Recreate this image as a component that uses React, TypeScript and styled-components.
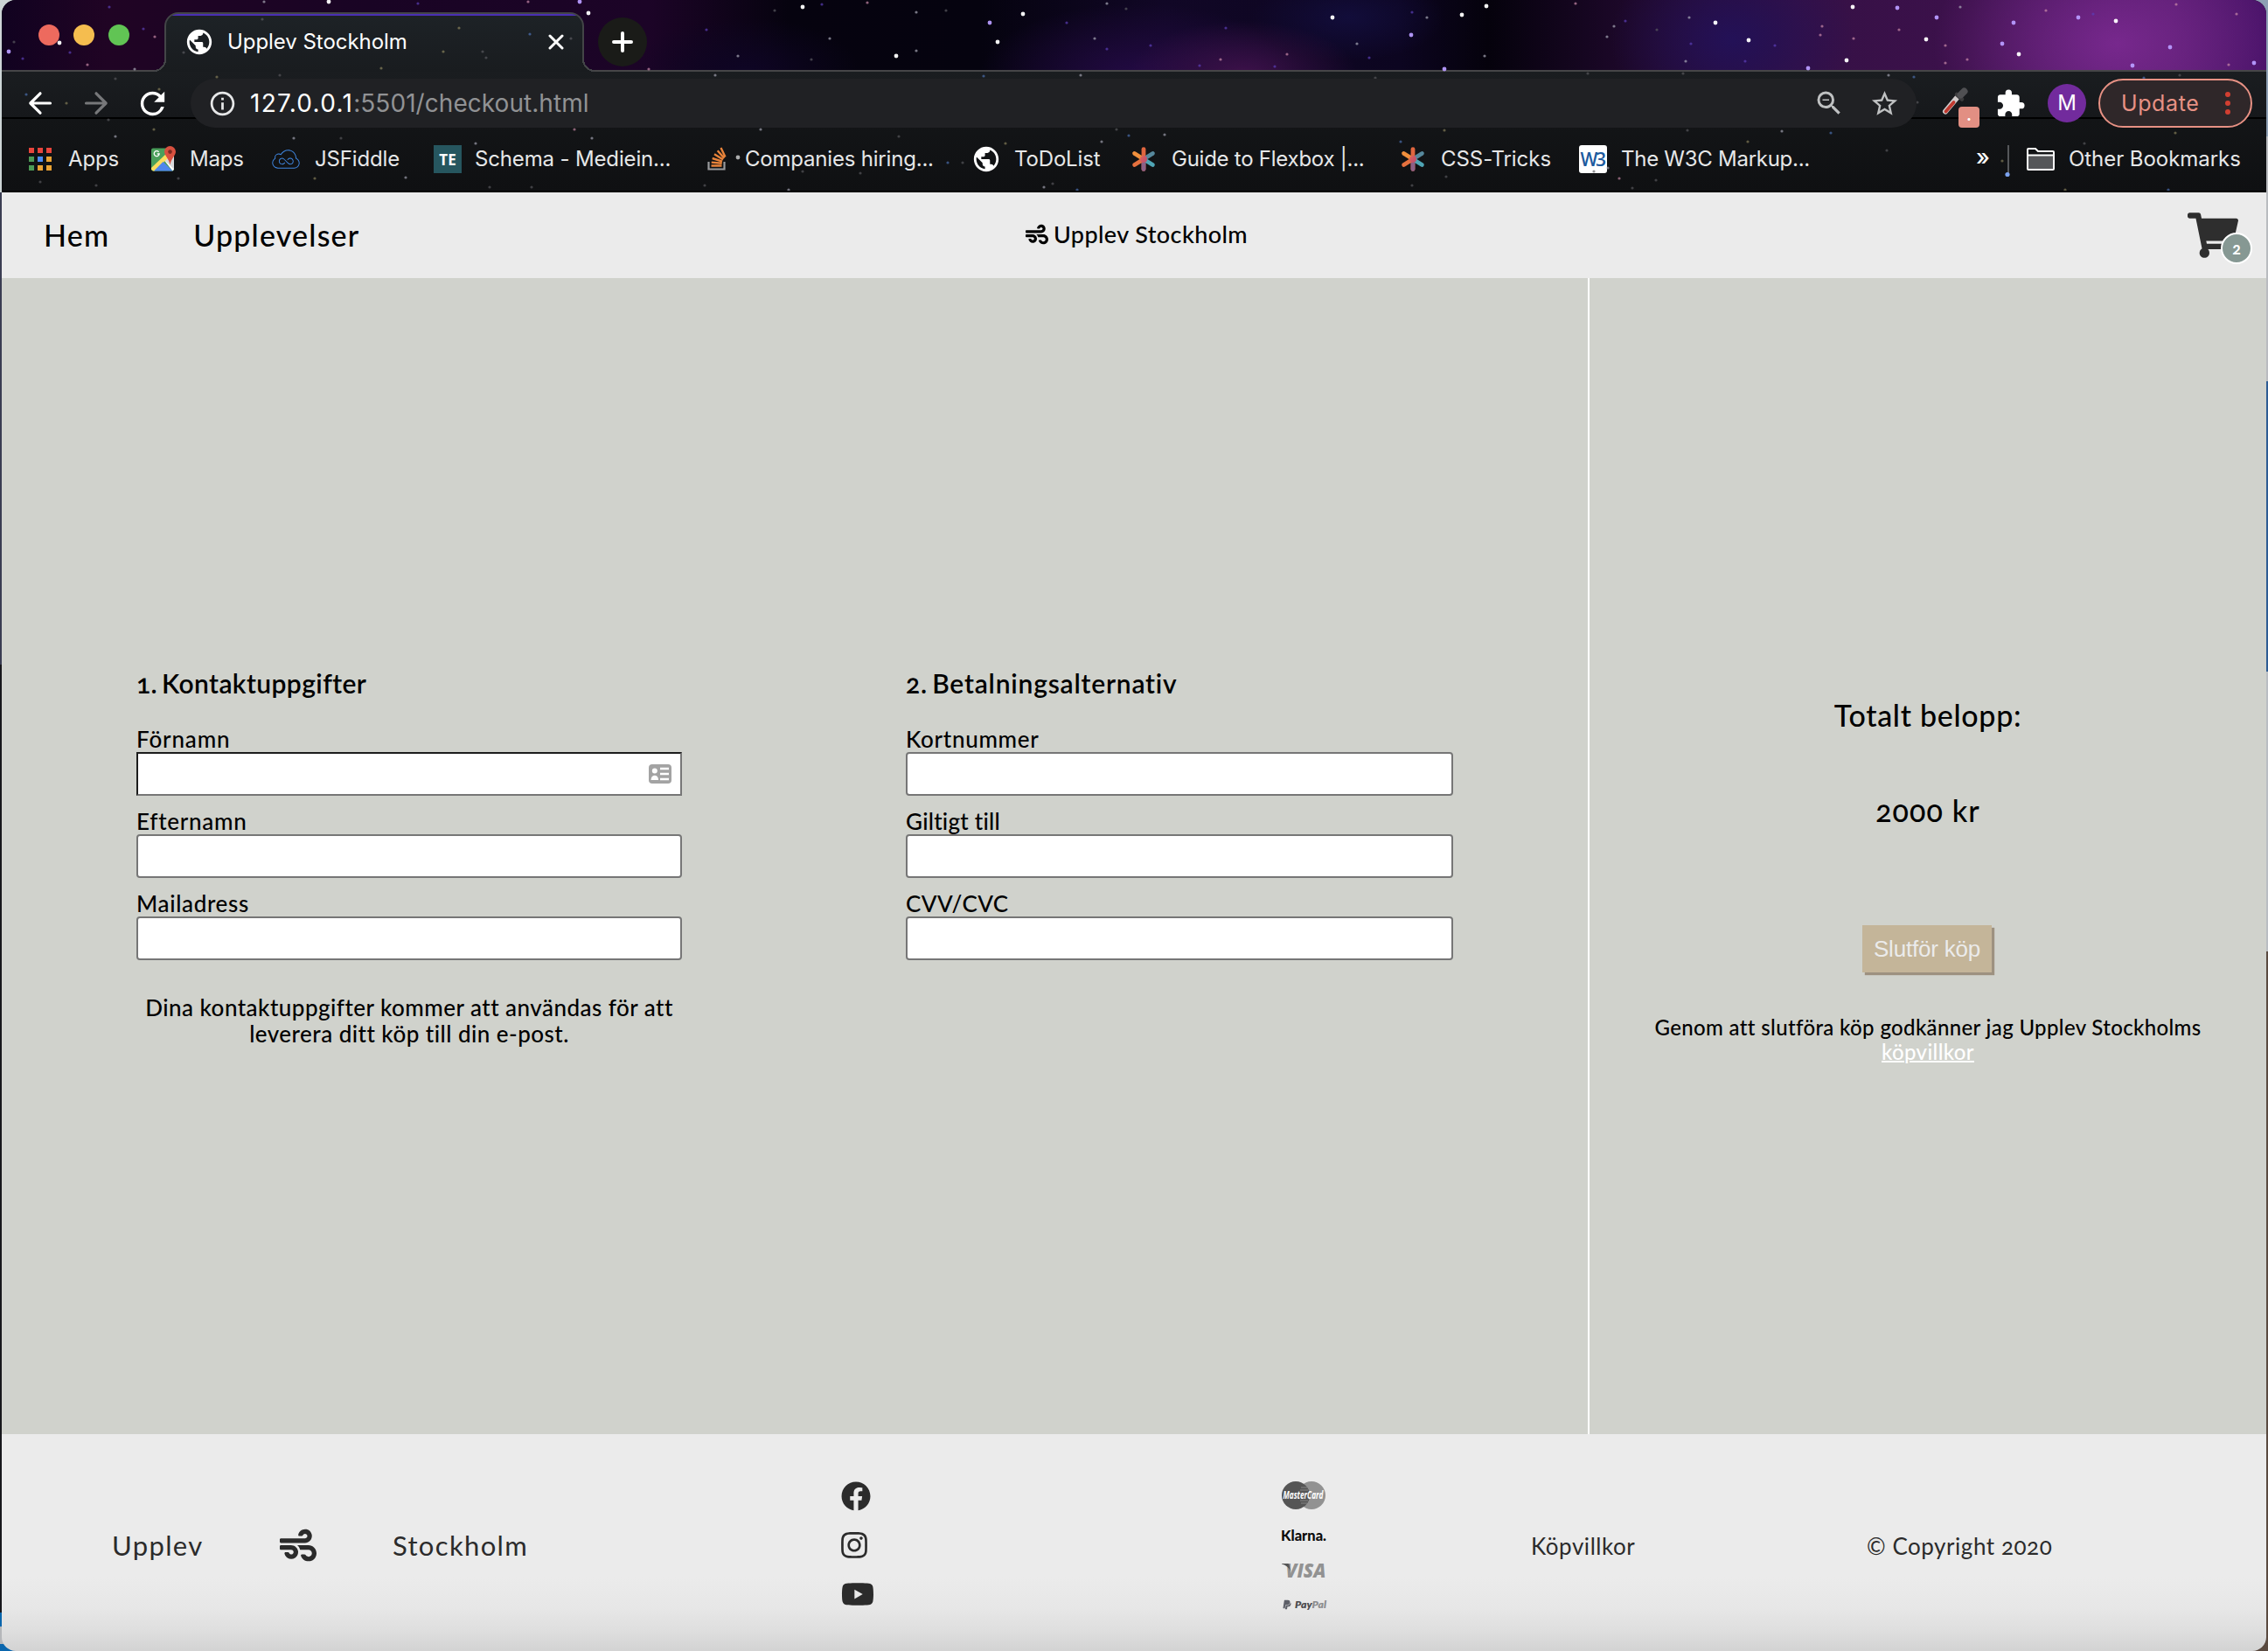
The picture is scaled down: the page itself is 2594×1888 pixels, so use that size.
import React from 'react';
import styled, { createGlobalStyle } from 'styled-components';
import { FaFacebook, FaInstagram, FaYoutube, FaWind, FaShoppingCart, FaJsfiddle, FaPaypal } from 'react-icons/fa';
import { MdPublic, MdRefresh, MdStarBorder, MdZoomOut, MdInfoOutline, MdExtension } from 'react-icons/md';

const Global = createGlobalStyle`
  * { box-sizing: border-box; }
  body { margin: 0; }
  svg { display: block; flex: none; }
`;

const ui = 'Inter, "Noto Sans", sans-serif';
const body = 'Lato, "Open Sans", sans-serif';

/* ---------- window ---------- */

const Desktop = styled.div`
  width: 2594px;
  height: 1888px;
  padding: 0 2px;
  overflow: hidden;
  background:
    linear-gradient(#cdd5d6 0 220px, #3a3d52 220px 760px, #17171b 760px 1844px, #0a66ad 1844px 1860px, #b5b7ba 1860px 1880px, #0a66ad 1880px) left / 50% 100% no-repeat,
    linear-gradient(#8d9fb4 0 156px, #b9bbbf 156px 436px, #2d5c94 436px 768px, #b9bdc2 768px 1088px, #5a4a40 1088px) right / 50% 100% no-repeat;
`;

const Window = styled.div`
  display: flex;
  flex-direction: column;
  height: 100%;
  border-radius: 16px;
  overflow: hidden;
`;

const Chrome = styled.div`
  position: relative;
  height: 220px;
  border-bottom: 2px solid #000;
  font-family: ${ui};
  background: #15181b;
`;

const StarField = styled.svg`
  position: absolute;
  left: -2px;
  top: 0;
  pointer-events: none;
`;

const TabStrip = styled.div`
  display: flex;
  align-items: flex-start;
  height: 82px;
  padding: 14px 0 0 187px;
  box-shadow: inset 0 -2px #464648;
  background:
    radial-gradient(ellipse 210px 150px at 2420px 50px, #77288d, #77288d00),
    radial-gradient(ellipse 140px 110px at 1980px 45px, #231157, #23115700),
    radial-gradient(ellipse 130px 60px at 1420px 84px, #3c1149, #3c114900),
    radial-gradient(ellipse 180px 80px at 1300px 84px, #220a42, #220a4200),
    radial-gradient(ellipse 110px 50px at 1540px 20px, #120d3a, #120d3a00),
    radial-gradient(ellipse 130px 60px at 850px 80px, #0e0524, #0e052400),
    linear-gradient(90deg, #110220 0, #200424 120px, #190424 420px, #1c0427 740px, #06030f 900px, #05030f 1120px, #110726 1330px, #0c0520 1600px, #05020c 1700px, #1a0726 1840px, #351045 2050px, #3c114b 2250px, #501a68 2480px, #431064 2590px);
`;

const Lights = styled.div`
  display: flex;
  gap: 16px;
  margin: 14px 0 0 -145px;
`;

const Light = styled.span<{ $color: string }>`
  width: 24px;
  height: 24px;
  border-radius: 50%;
  background: ${(p) => p.$color};
`;

const Tab = styled.div`
  position: relative;
  display: flex;
  align-items: center;
  width: 480px;
  height: 68px;
  margin-left: 40px;
  padding: 0 0 2px 21px;
  border: 2px solid #434547;
  border-bottom: 0;
  border-radius: 16px 16px 0 0;
  background: linear-gradient(#4a2eb4 0 2px, #1d2226 2px, #191c1f 100%);
  color: #fff;

  &::before,
  &::after {
    content: '';
    position: absolute;
    bottom: 0;
    width: 14px;
    height: 14px;
  }
  &::before {
    left: -14px;
    background: radial-gradient(circle at 0 0, transparent 12px, #434547 12px 14px, #191c1f 14px);
  }
  &::after {
    right: -14px;
    background: radial-gradient(circle at 100% 0, transparent 12px, #434547 12px 14px, #191c1f 14px);
  }
`;

const TabTitle = styled.span`
  flex: 1;
  margin-left: 15px;
  font-size: 24px;
  line-height: 30px;
  letter-spacing: -0.05px;
`;

const CloseMark = styled.svg`
  margin-right: 21px;
`;

const NewTab = styled.div`
  display: grid;
  place-items: center;
  width: 56px;
  height: 56px;
  margin: 6px 0 0 16px;
  border-radius: 50%;
  background: #1a1b18;
`;

const AddressRow = styled.div`
  display: flex;
  align-items: center;
  height: 54px;
  padding: 20px 16px 0 24px;
  background: linear-gradient(#1a1d20, #16181b);
  border-bottom: 2px solid #000;
`;

const NavIcon = styled.span<{ $dim?: boolean }>`
  display: grid;
  place-items: center;
  width: 40px;
  margin-right: 24px;
  color: ${(p) => (p.$dim ? '#77787a' : '#fff')};
`;

const AddressPill = styled.div`
  position: relative;
  z-index: 2;
  display: flex;
  align-items: center;
  flex: none;
  width: 1974px;
  height: 56px;
  padding: 0 19px 0 20px;
  border-radius: 28px;
  background: #202124;
  color: #bfc1c2;
`;

const Host = styled.span`
  margin-left: 15px;
  font-size: 28px;
  letter-spacing: 1.3px;
  color: #fff;
`;

const Path = styled.span`
  flex: 1;
  font-size: 28px;
  letter-spacing: 0.05px;
  color: #919294;
`;

const PillIcon = styled.span<{ $gap?: number; $color?: string }>`
  margin-left: ${(p) => p.$gap ?? 0}px;
  color: ${(p) => p.$color ?? '#bfc1c2'};
`;

const Picker = styled.div`
  position: relative;
  z-index: 2;
  width: 44px;
  height: 44px;
  margin: 0 0 0 29px;
`;

const PickerBadge = styled.span`
  position: absolute;
  left: 19px;
  top: 26px;
  width: 24px;
  height: 24px;
  border-radius: 4px;
  background: #e28f83;
  color: #fff;
  font: 700 18px/20px ${ui};
  text-align: center;
`;

const Puzzle = styled.div`
  margin: 0 0 0 17px;
  color: #fff;
`;

const Avatar = styled.div`
  position: relative;
  z-index: 2;
  flex: none;
  width: 44px;
  height: 44px;
  margin-left: 25px;
  border-radius: 50%;
  background: #722b9d;
  color: #fff;
  font-size: 24px;
  line-height: 44px;
  text-align: center;
`;

const UpdateButton = styled.div`
  position: relative;
  z-index: 2;
  display: flex;
  align-items: center;
  flex: none;
  width: 176px;
  height: 56px;
  margin-left: 14px;
  padding: 0 23px 0 24px;
  justify-content: space-between;
  border: 2px solid #e79184;
  border-radius: 28px;
  background: #2f2729;
  color: #e79184;
  font-size: 25px;
  letter-spacing: 0.6px;
`;

const Dots = styled.span`
  display: flex;
  flex-direction: column;
  gap: 4px;

  i {
    width: 6px;
    height: 6px;
    border-radius: 50%;
    background: #d23f31;
  }
`;

const BookmarkBar = styled.div`
  display: flex;
  align-items: center;
  height: 82px;
  padding: 9px 0 0 31px;
  background: linear-gradient(#131517, #0f1012);
  color: #e6e7e8;
  font-size: 24px;
  white-space: nowrap;
`;

const Bookmark = styled.div<{ $width: number; $icon: number }>`
  display: grid;
  grid-template-columns: ${(p) => p.$icon}px auto;
  align-items: center;
  justify-content: start;
  flex: none;
  width: ${(p) => p.$width}px;
`;

const BookmarkLabel = styled.span<{ $spacing?: number }>`
  letter-spacing: ${(p) => p.$spacing ?? -0.15}px;
`;

const TeTile = styled.span`
  width: 32px;
  height: 32px;
  background: #26565f;
  color: #fff;
  font: 700 17px/33px "Open Sans", sans-serif;
  text-align: center;
`;

const W3Tile = styled.span`
  width: 32px;
  height: 32px;
  border-radius: 3px;
  background: #fff;
  color: #1c5a9e;
  font: 600 21px/32px "Open Sans", sans-serif;
  letter-spacing: -2.5px;
  text-indent: -2px;
  text-align: center;
`;

const Chevrons = styled.span`
  width: 36px;
  margin: -4px 0 0 1px;
  font-size: 26px;
  font-weight: 500;
  color: #fff;
`;

const BarRule = styled.span`
  width: 2px;
  height: 32px;
  margin-right: 20px;
  background: #55575a;
`;

/* ---------- page ---------- */

const Header = styled.header`
  display: grid;
  grid-template-columns: 1fr auto 1fr;
  align-items: center;
  height: 98px;
  padding: 0 32px 0 48px;
  background: #ebebeb;
  color: #000;
  font-family: ${body};
`;

const Nav = styled.nav`
  display: flex;
  gap: 96px;
`;

const NavLink = styled.a`
  font-size: 34px;
  font-weight: 500;
  line-height: 40px;
  letter-spacing: 1.2px;
`;

const Brand = styled.div`
  display: flex;
  align-items: center;
  gap: 6px;
  margin-top: -3px;
  padding-right: 10px;
  font-size: 27px;
  font-weight: 500;
  letter-spacing: 0.4px;
`;

const CartLink = styled.a`
  position: relative;
  justify-self: end;
  color: #2e2e2e;
`;

const CartCount = styled.span`
  position: absolute;
  right: -16px;
  bottom: -4px;
  width: 36px;
  height: 36px;
  border: 2px solid #fff;
  border-radius: 50%;
  background: #869893;
  color: #fff;
  font: 700 18px/32px ${body};
  font-feature-settings: 'onum';
  text-align: center;
`;

const Main = styled.main`
  display: flex;
  height: 1322px;
  background: #d0d2cc;
  color: #000;
  font-family: ${body};
  font-weight: 500;
  font-feature-settings: 'onum';
`;

const Forms = styled.div`
  display: flex;
  width: 1814px;
  padding: 445px 0 0 154px;
  gap: 256px;
`;

const Section = styled.section<{ $width: number }>`
  display: flex;
  flex-direction: column;
  width: ${(p) => p.$width}px;
`;

const SectionTitle = styled.h2<{ $spacing: number }>`
  margin: 0 0 17px;
  font-size: 30px;
  font-weight: 600;
  line-height: 36px;
  letter-spacing: ${(p) => p.$spacing}px;
  word-spacing: -3px;
`;

const Field = styled.label<{ $spacing: number }>`
  display: flex;
  flex-direction: column;
  margin-top: 14px;
  font-size: 26px;
  line-height: 30px;
  letter-spacing: ${(p) => p.$spacing}px;
`;

const Entry = styled.div<{ $inset?: boolean }>`
  display: flex;
  align-items: center;
  justify-content: flex-end;
  height: 50px;
  padding-right: 10px;
  border: 2px solid #767676;
  border-color: ${(p) => (p.$inset ? '#1c1c1c #767676 #767676 #1c1c1c' : '#767676')};
  border-radius: ${(p) => (p.$inset ? 0 : 4)}px;
  background: #fff;
`;

const Notice = styled.p`
  margin: 39px 0 0;
  font-size: 26px;
  line-height: 30px;
  letter-spacing: 0.47px;
  text-align: center;
`;

const Summary = styled.aside`
  display: flex;
  flex-direction: column;
  align-items: center;
  flex: 1;
  padding-top: 480px;
  border-left: 2px solid #fff;
`;

const Total = styled.p<{ $after: number; $spacing: number }>`
  margin: 0 0 ${(p) => p.$after}px;
  font-size: 34px;
  line-height: 40px;
  letter-spacing: ${(p) => p.$spacing}px;
`;

const PayButton = styled.button`
  width: 148px;
  height: 54px;
  margin-right: 2px;
  padding: 0;
  border: 0;
  background: #c4b599;
  box-shadow: 3px 3px 1px #9d9180;
  color: #ebebeb;
  font: 400 26px/54px "Liberation Sans", Arial, sans-serif;
  letter-spacing: -0.2px;
`;

const Terms = styled.p`
  margin: 49px 0 0;
  font-size: 24px;
  line-height: 28px;
  letter-spacing: 0.35px;
  text-align: center;

  a {
    color: #fff;
    text-decoration: underline;
    text-decoration-thickness: 2px;
  }
`;

const Footer = styled.footer`
  display: grid;
  grid-template-columns: 192px 129px 513px 504px 285px 384px 1fr;
  align-items: center;
  height: 248px;
  padding: 6px 0 0 126px;
  background: linear-gradient(#ebebeb 0, #ebebeb 66%, #e7e7e7 80%, #dedede 91%, #d3d3d3 100%);
  color: #2b2b2b;
  font-family: ${body};
`;

const FooterBrand = styled.span`
  margin-top: -1px;
  font-size: 31px;
  line-height: 36px;
  letter-spacing: 1.35px;
`;

const FooterText = styled.span`
  margin-top: 2px;
  font-size: 26px;
  line-height: 30px;
  letter-spacing: 0.55px;
  font-feature-settings: 'onum';
`;

const Social = styled.div`
  display: grid;
  grid-auto-rows: 34px;
  row-gap: 22px;
  align-items: center;
`;

const InstagramSlot = styled.span`
  margin-left: -2px;
`;

const Payments = styled.div`
  display: flex;
  flex-direction: column;
  gap: 25px;
`;

/* ---------- drawings ---------- */

type Star = [number, number, number];
const tones = ['#5a5a60', '#a9a9b8', '#ffffff', '#5b3fb8', '#b79bff', '#c98aa8', '#8a835c', '#4f74b8'];

const stars: Star[] = [
  [10, 59, 4], [16, 48, 0], [26, 67, 3], [68, 49, 2], [80, 60, 3], [100, 74, 5], [164, 33, 3], [177, 42, 5], [154, 79, 1], [125, 8, 3], [302, 2, 1], [376, 2, 2], [478, 4, 3],
  [210, 60, 0], [507, 59, 6], [300, 22, 0], [436, 78, 6], [320, 86, 0], [248, 88, 6], [132, 90, 0], [30, 108, 7], [76, 118, 6], [182, 102, 6], [124, 137, 0], [176, 148, 6], [132, 156, 1],
  [336, 158, 1], [390, 158, 0], [204, 204, 0], [360, 204, 6], [464, 203, 1], [110, 212, 0], [46, 208, 0], [552, 59, 0], [525, 32, 6], [606, 39, 7], [556, 66, 0], [653, 44, 0],
  [663, 2, 4], [673, 15, 2], [742, 79, 5], [604, 2, 5], [657, 148, 5], [677, 158, 1], [544, 164, 1], [560, 214, 0], [608, 214, 0], [808, 34, 3], [918, 8, 2], [940, 5, 3], [992, 3, 5],
  [886, 12, 0], [1048, 14, 1], [1082, 12, 0], [1132, 26, 4], [1170, 16, 2], [1141, 48, 2], [949, 44, 1], [1048, 58, 1], [844, 64, 1], [1025, 64, 2], [928, 68, 0], [1252, 44, 1],
  [1266, 56, 3], [1220, 26, 3], [1316, 52, 3], [1266, 4, 1], [1288, 10, 0], [1402, 32, 3], [1524, 20, 2], [1672, 17, 2], [1632, 20, 1], [1614, 40, 4], [1615, 14, 3], [1552, 50, 1],
  [1566, 66, 3], [1472, 62, 5], [1458, 76, 3], [1396, 68, 5], [1372, 75, 3], [1652, 79, 4], [1236, 86, 1], [1125, 87, 7], [818, 86, 1], [1573, 89, 0], [870, 148, 1], [1028, 156, 0],
  [1332, 154, 1], [1291, 155, 7], [1260, 162, 1], [1277, 148, 0], [1150, 164, 6], [1602, 162, 7], [1652, 149, 6], [844, 180, 2], [1101, 186, 0], [1084, 186, 7], [806, 212, 0], [902, 217, 1],
  [1194, 214, 1], [1204, 210, 0], [1232, 217, 7], [1615, 212, 0], [1654, 202, 0], [984, 198, 0], [918, 196, 0], [1700, 7, 2], [1802, 4, 5], [1962, 26, 2], [2000, 46, 2], [1932, 20, 1],
  [1846, 30, 1], [1838, 42, 1], [1859, 24, 3], [1895, 34, 0], [1934, 50, 3], [2030, 52, 3], [2119, 8, 2], [2170, 9, 4], [2242, 8, 1], [2215, 20, 4], [2203, 45, 2], [2172, 34, 5],
  [2225, 52, 5], [2309, 62, 2], [2225, 72, 5], [2250, 68, 5], [2112, 69, 2], [2068, 78, 4], [1928, 70, 1], [1996, 70, 3], [1698, 64, 1], [2303, 26, 4], [2290, 50, 4], [2340, 12, 5],
  [2377, 20, 4], [2394, 16, 3], [2420, 24, 2], [2482, 54, 4], [2489, 5, 5], [2439, 75, 4], [2549, 74, 5], [2578, 72, 4], [2558, 16, 5], [2084, 30, 5], [2082, 40, 5], [2120, 44, 5],
  [1816, 84, 0], [1925, 84, 0], [2160, 86, 1], [2189, 88, 7], [2452, 89, 7], [2493, 86, 0], [2193, 117, 0], [2038, 150, 1], [2094, 152, 7], [1930, 149, 0], [1999, 162, 6], [2158, 172, 0],
  [1823, 196, 0], [1852, 204, 5], [1839, 192, 1], [1894, 206, 0], [1867, 215, 0], [2290, 184, 6], [2296, 199, 7], [2362, 217, 6], [2480, 217, 7], [2384, 164, 0], [2488, 152, 6],
];

const Stars = () => (
  <StarField width="2594" height="218" viewBox="0 0 2594 218">
    {stars.map(([x, y, tone]) => {
      const bright = tone === 2 || tone === 4;
      return (
        <circle key={`${x}-${y}`} cx={x} cy={y} r={bright ? 2.4 : 1.6} fill={tones[tone]} opacity={y > 82 ? 0.65 : bright ? 0.95 : 0.7} />
      );
    })}
    <circle cx="2296" cy="199.500" r="2.600" fill="#7ba2ee" />
  </StarField>
);

const Arrow = ({ flip }: { flip?: boolean }) => (
  <svg width="28" height="28" viewBox="0 0 28 28" fill="none" stroke="currentColor" strokeWidth="3.2" strokeLinecap="round" strokeLinejoin="round">
    <path d={flip ? 'M2.500 14H25M14 2.800L25.200 14L14 25.200' : 'M25.500 14H3M14 2.800L2.800 14L14 25.200'} />
  </svg>
);

const AppsIcon = () => {
  const colors = ['#e8453c', '#e8453c', '#e8453c', '#4c9a56', '#4a8af4', '#eaa233', '#4c9a56', '#eaa233', '#eaa233'];
  return (
    <svg width="26" height="26" viewBox="0 0 26 26">
      {colors.map((c, i) => (
        <rect key={i} x={(i % 3) * 10} y={Math.floor(i / 3) * 10} width="6" height="6" fill={c} />
      ))}
    </svg>
  );
};

const MapsIcon = () => (
  <svg width="29" height="29" viewBox="0 0 29 29">
    <rect x="0" y="2.500" width="26" height="26" rx="2" fill="#4a9f5b" />
    <path d="M13 14L26 8v18.500L24 28z" fill="#d9dadc" />
    <path d="M0 25L19 7l3.500 3.500L4 28.500H2l-2-2z" fill="#fbdc5e" />
    <path d="M13.500 18L24.500 28.500H3z" fill="#4f86ec" />
    <path d="M15 16l11 10.500-1.500 2z" fill="#fff" />
    <path d="M21.500 0a6.500 6.500 0 0 0-6.500 6.500c0 4.500 5 7 6.500 15 1.500-8 6.500-10.500 6.500-15A6.500 6.500 0 0 0 21.500 0z" fill="#d8503f" />
    <circle cx="21.500" cy="6.600" r="2.300" fill="#7c2a22" />
    <path d="M8.600 6.800a3 3 0 1 0 .6 2.200H6.800" fill="none" stroke="#fff" strokeWidth="1.300" />
  </svg>
);

const StackIcon = () => (
  <svg width="22" height="27" viewBox="0 0 22 27" fill="none">
    <path d="M1.500 17v8.500h18V17" stroke="#9a9b9d" strokeWidth="2.200" />
    <g stroke="#e8833a" strokeWidth="2.400">
      <path d="M4.500 21.500h12M4.700 17.600l12 1.200M5.700 13l11.300 3.600M8 8.200l10 6.400M11.700 4.300l7.600 8.600M15.500 1l5 10.500" />
    </g>
  </svg>
);

const Asterisk = () => (
  <svg width="28" height="28" viewBox="0 0 28 28" fill="none" strokeWidth="4.800" strokeLinecap="round">
    <defs>
      <linearGradient id="aster" x1="2" y1="4" x2="26" y2="24" gradientUnits="userSpaceOnUse">
        <stop offset="0" stopColor="#f5953b" />
        <stop offset="0.500" stopColor="#cf5465" />
        <stop offset="1" stopColor="#8a4f8c" />
      </linearGradient>
    </defs>
    <path d="M14 2.600V25.400" stroke="#e0663f" />
    <path d="M14 14V25.400" stroke="#8c5f86" />
    <path d="M3.600 7.500L14 14" stroke="#f08f3c" />
    <path d="M3.600 20.500L14 14" stroke="#e5713e" />
    <path d="M24.400 7.500L14 14" stroke="#56889c" />
    <path d="M24.400 20.500L14 14" stroke="#4fa5b5" />
    <circle cx="14" cy="14" r="4" fill="url(#aster)" />
  </svg>
);

const FolderIcon = () => (
  <svg width="32" height="26" viewBox="0 0 32 26" stroke="#fff" strokeWidth="2">
    <path d="M1 8.500h30V24a1 1 0 0 1-1 1H2a1 1 0 0 1-1-1z" fill="#555659" />
    <path d="M1 8.500V2a1 1 0 0 1 1-1h8l3 3h17a1 1 0 0 1 1 1v3.500" fill="none" />
  </svg>
);

const PickerIcon = () => (
  <svg width="44" height="44" viewBox="0 0 44 44" strokeLinecap="round">
    <path d="M4 31.500L17 16" stroke="#cfcaca" strokeWidth="6" />
    <path d="M4.500 31.500L13.500 21" stroke="#c0392f" strokeWidth="3.800" />
    <path d="M17 12l6 5.500" stroke="#3b3b3d" strokeWidth="4.500" />
    <path d="M21.500 12.500l4-4" stroke="#505053" strokeWidth="8" />
  </svg>
);

const ContactCard = () => (
  <svg width="26" height="22" viewBox="0 0 26 22">
    <rect width="26" height="22" rx="4" fill="#a3a3a3" />
    <circle cx="6.800" cy="7.500" r="3" fill="#fff" />
    <path d="M2.500 18c0-7 8.600-7 8.600 0z" fill="#fff" />
    <path d="M13 5h10M13 11h10M13 17h10" stroke="#fff" strokeWidth="2.400" />
  </svg>
);

const MasterCard = () => (
  <svg width="50" height="32" viewBox="0 0 50 32" overflow="visible">
    <circle cx="34" cy="16" r="16" fill="#929292" />
    <circle cx="16" cy="16" r="16" fill="#555" />
    <path d="M22 7h7M21 10h9M21 22h9M22 25h7" stroke="#858585" strokeWidth="1.200" />
    <text x="1.500" y="20" fill="#fff" fontFamily='"Open Sans", sans-serif' fontWeight="700" fontStyle="italic" fontSize="12" textLength="46" lengthAdjust="spacingAndGlyphs">MasterCard</text>
  </svg>
);

const Klarna = () => (
  <svg width="50" height="12" viewBox="0 0 50 12" overflow="visible">
    <text x="-1" y="11" fill="#0b0b0b" fontFamily="Lato, sans-serif" fontWeight="900" fontSize="16" textLength="52" lengthAdjust="spacingAndGlyphs">Klarna.</text>
  </svg>
);

const Visa = () => (
  <svg width="50" height="16" viewBox="0 0 50 16" overflow="visible">
    <text x="4.500" y="16" fill="#929292" fontFamily='"Open Sans", sans-serif' fontWeight="800" fontStyle="italic" fontSize="22" textLength="46" lengthAdjust="spacingAndGlyphs">VISA</text>
    <path d="M0 0h6.500c1.200 0 1.700.6 2 1.700L10 9C8.500 5 5 2 0 .6z" fill="#555" />
  </svg>
);

const PayPalMark = styled.div`
  display: flex;
  align-items: center;
  gap: 4px;
  height: 12px;
  color: #5d5f68;
`;

const PayPal = () => (
  <PayPalMark>
    <FaPaypal size={12} />
    <svg width="35" height="12" viewBox="0 0 35 12" overflow="visible">
      <text x="-1" y="9.500" fontFamily="Lato, sans-serif" fontWeight="800" fontStyle="italic" fontSize="11" textLength="36" lengthAdjust="spacingAndGlyphs" fill="#4c4c4f">
        Pay<tspan fill="#8d8d8f">Pal</tspan>
      </text>
    </svg>
  </PayPalMark>
);

/* ---------- content ---------- */

const bookmarks = [
  { label: 'Apps', icon: <AppsIcon />, offset: 45, width: 140 },
  { label: 'Maps', icon: <MapsIcon />, offset: 44, width: 138, spacing: -0.2 },
  { label: 'JSFiddle', icon: <FaJsfiddle size={32} color="#3f86e0" />, offset: 49, width: 185 },
  { label: 'Schema - Mediein...', icon: <TeTile>TE</TeTile>, offset: 47, width: 313 },
  { label: 'Companies hiring...', icon: <StackIcon />, offset: 43, width: 302, spacing: -0.2 },
  { label: 'ToDoList', icon: <MdPublic size={34} color="#fff" />, offset: 49, width: 183 },
  { label: 'Guide to Flexbox |...', icon: <Asterisk />, offset: 46, width: 308, spacing: -0.25 },
  { label: 'CSS-Tricks', icon: <Asterisk />, offset: 46, width: 204, spacing: -0.05 },
  { label: 'The W3C Markup...', icon: <W3Tile>W3</W3Tile>, offset: 48, width: 453, spacing: -0.27 },
];

const contactFields = [
  { label: 'Förnamn', spacing: 0.85, active: true },
  { label: 'Efternamn', spacing: 0.75 },
  { label: 'Mailadress', spacing: 0.65 },
];

const paymentFields = [
  { label: 'Kortnummer', spacing: 0.7 },
  { label: 'Giltigt till', spacing: 0.25 },
  { label: 'CVV/CVC', spacing: 0.45 },
];

export default function App() {
  return (
    <Desktop>
      <Global />
      <Window>
        <Chrome>
          <TabStrip>
            <Lights>
              <Light $color="#ed6a5e" />
              <Light $color="#f5bd4f" />
              <Light $color="#61c454" />
            </Lights>
            <Tab>
              <MdPublic size={34} />
              <TabTitle>Upplev Stockholm</TabTitle>
              <CloseMark width="18" height="18" viewBox="0 0 18 18" stroke="#fff" strokeWidth="3" strokeLinecap="round">
                <path d="M2 2l14 14M16 2L2 16" />
              </CloseMark>
            </Tab>
            <NewTab>
              <svg width="26" height="26" viewBox="0 0 26 26" stroke="#fff" strokeWidth="4" strokeLinecap="round">
                <path d="M13 3v20M3 13h20" />
              </svg>
            </NewTab>
          </TabStrip>
          <AddressRow>
            <NavIcon><Arrow /></NavIcon>
            <NavIcon $dim><Arrow flip /></NavIcon>
            <NavIcon><MdRefresh size={41} /></NavIcon>
            <AddressPill>
              <PillIcon $color="#e6e7e8"><MdInfoOutline size={33} /></PillIcon>
              <Host>127.0.0.1</Host>
              <Path>:5501/checkout.html</Path>
              <PillIcon><MdZoomOut size={36} /></PillIcon>
              <PillIcon $gap={28}><MdStarBorder size={35} /></PillIcon>
            </AddressPill>
            <Picker>
              <PickerIcon />
              <PickerBadge>.</PickerBadge>
            </Picker>
            <Puzzle><MdExtension size={35} /></Puzzle>
            <Avatar>M</Avatar>
            <UpdateButton>
              Update
              <Dots><i /><i /><i /></Dots>
            </UpdateButton>
          </AddressRow>
          <BookmarkBar>
            {bookmarks.map((b) => (
              <Bookmark key={b.label} $width={b.width} $icon={b.offset}>
                {b.icon}
                <BookmarkLabel $spacing={b.spacing}>{b.label}</BookmarkLabel>
              </Bookmark>
            ))}
            <Chevrons>»</Chevrons>
            <BarRule />
            <Bookmark $width={250} $icon={48}>
              <FolderIcon />
              <BookmarkLabel $spacing={-0.05}>Other Bookmarks</BookmarkLabel>
            </Bookmark>
          </BookmarkBar>
          <Stars />
        </Chrome>

        <Header>
          <Nav>
            <NavLink>Hem</NavLink>
            <NavLink>Upplevelser</NavLink>
          </Nav>
          <Brand>
            <FaWind size={26} />
            <span>Upplev Stockholm</span>
          </Brand>
          <CartLink>
            <FaShoppingCart size={58} />
            <CartCount>2</CartCount>
          </CartLink>
        </Header>

        <Main>
          <Forms>
            <Section $width={624}>
              <SectionTitle $spacing={0.4}>1. Kontaktuppgifter</SectionTitle>
              {contactFields.map((f) => (
                <Field key={f.label} $spacing={f.spacing}>
                  {f.label}
                  <Entry $inset={f.active}>{f.active && <ContactCard />}</Entry>
                </Field>
              ))}
              <Notice>
                Dina kontaktuppgifter kommer att användas för att
                <br />
                leverera ditt köp till din e-post.
              </Notice>
            </Section>
            <Section $width={626}>
              <SectionTitle $spacing={0.8}>2. Betalningsalternativ</SectionTitle>
              {paymentFields.map((f) => (
                <Field key={f.label} $spacing={f.spacing}>
                  {f.label}
                  <Entry />
                </Field>
              ))}
            </Section>
          </Forms>
          <Summary>
            <Total $after={69} $spacing={0.7}>Totalt belopp:</Total>
            <Total $after={111} $spacing={1.1}>2000 kr</Total>
            <PayButton>Slutför köp</PayButton>
            <Terms>
              Genom att slutföra köp godkänner jag Upplev Stockholms
              <br />
              <a>köpvillkor</a>
            </Terms>
          </Summary>
        </Main>

        <Footer>
          <FooterBrand>Upplev</FooterBrand>
          <FaWind size={42} />
          <FooterBrand>Stockholm</FooterBrand>
          <Social>
            <FaFacebook size={34} />
            <InstagramSlot><FaInstagram size={34} /></InstagramSlot>
            <FaYoutube size={38} />
          </Social>
          <Payments>
            <MasterCard />
            <Klarna />
            <Visa />
            <PayPal />
          </Payments>
          <FooterText>Köpvillkor</FooterText>
          <FooterText>© Copyright 2020</FooterText>
        </Footer>
      </Window>
    </Desktop>
  );
}
